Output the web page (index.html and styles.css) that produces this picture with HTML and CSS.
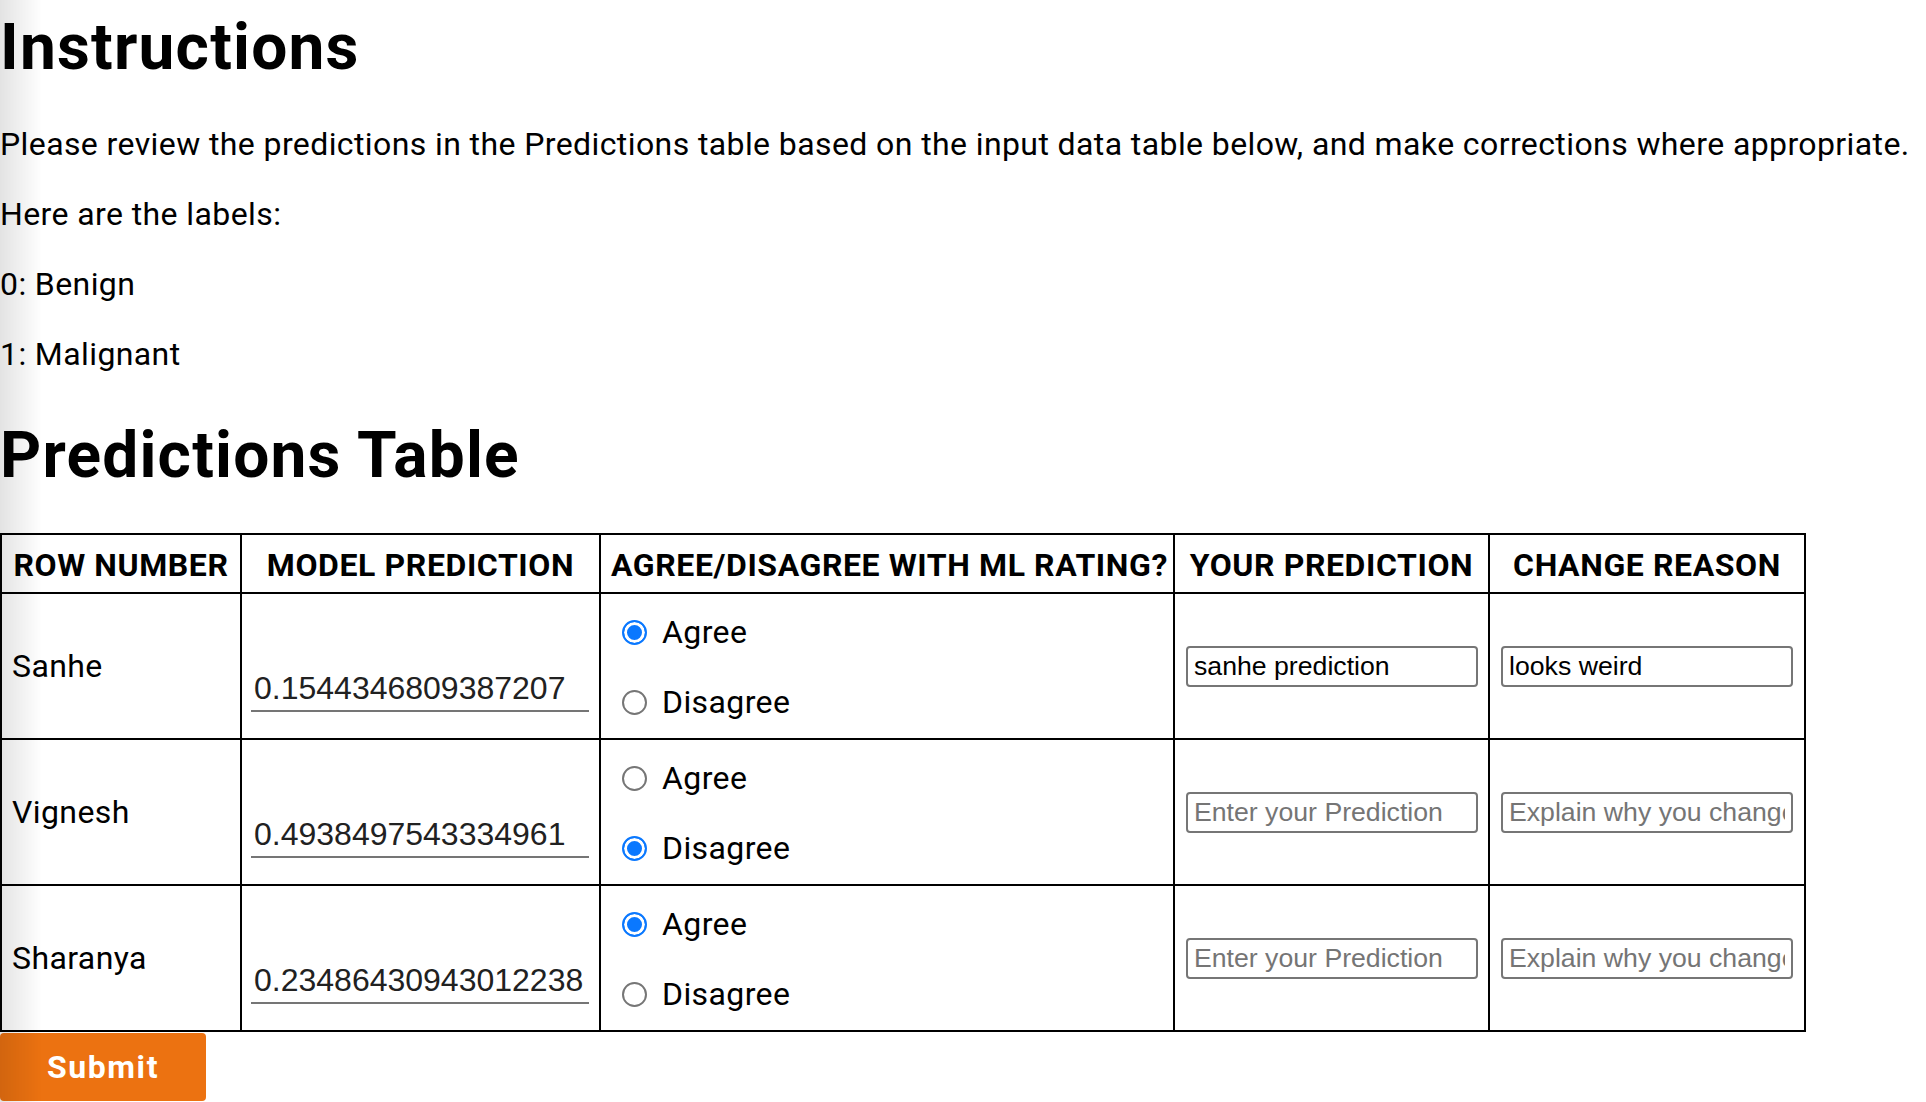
FILE: index.html
```html
<!DOCTYPE html>
<html lang="en">
<head>
<meta charset="utf-8">
<title>Predictions Review</title>
<link rel="stylesheet" href="styles.css">
</head>
<body>
<main class="page">
  <h1 class="title title-first">Instructions</h1>
  <p class="text">Please review the predictions in the Predictions table based on the input data table below, and make corrections where appropriate.</p>
  <p class="text">Here are the labels:</p>
  <p class="text">0: Benign</p>
  <p class="text">1: Malignant</p>
  <h2 class="title title-table">Predictions Table</h2>
  <form class="review">
    <table class="pred-table">
      <colgroup>
        <col class="c-row">
        <col class="c-model">
        <col class="c-agree">
        <col class="c-yours">
        <col class="c-reason">
      </colgroup>
      <thead>
        <tr>
          <th>ROW NUMBER</th>
          <th>MODEL PREDICTION</th>
          <th>AGREE/DISAGREE WITH ML RATING?</th>
          <th>YOUR PREDICTION</th>
          <th>CHANGE REASON</th>
        </tr>
      </thead>
      <tbody>
        <tr>
          <td class="row-name">Sanhe</td>
          <td class="model"><div class="num-field">0.1544346809387207</div></td>
          <td class="agree">
            <div class="radios">
              <label class="radio"><input type="radio" name="r1" checked><span>Agree</span></label>
              <label class="radio"><input type="radio" name="r1"><span>Disagree</span></label>
            </div>
          </td>
          <td class="entry"><input class="text-input" type="text" value="sanhe prediction" placeholder="Enter your Prediction"></td>
          <td class="entry"><input class="text-input" type="text" value="looks weird" placeholder="Explain why you changed the prediction"></td>
        </tr>
        <tr>
          <td class="row-name">Vignesh</td>
          <td class="model"><div class="num-field">0.4938497543334961</div></td>
          <td class="agree">
            <div class="radios">
              <label class="radio"><input type="radio" name="r2"><span>Agree</span></label>
              <label class="radio"><input type="radio" name="r2" checked><span>Disagree</span></label>
            </div>
          </td>
          <td class="entry"><input class="text-input" type="text" placeholder="Enter your Prediction"></td>
          <td class="entry"><input class="text-input" type="text" placeholder="Explain why you changed the prediction"></td>
        </tr>
        <tr>
          <td class="row-name">Sharanya</td>
          <td class="model"><div class="num-field">0.23486430943012238</div></td>
          <td class="agree">
            <div class="radios">
              <label class="radio"><input type="radio" name="r3" checked><span>Agree</span></label>
              <label class="radio"><input type="radio" name="r3"><span>Disagree</span></label>
            </div>
          </td>
          <td class="entry"><input class="text-input" type="text" placeholder="Enter your Prediction"></td>
          <td class="entry"><input class="text-input" type="text" placeholder="Explain why you changed the prediction"></td>
        </tr>
      </tbody>
    </table>
    <button class="submit" type="button">Submit</button>
  </form>
</main>
<div class="edge-shade"></div>
</body>
</html>
```
FILE: styles.css
```css
html, body {
  margin: 0;
  padding: 0;
  background: #ffffff;
}

body {
  font-family: Roboto, "Liberation Sans", sans-serif;
  font-size: 32px;
  letter-spacing: 0.4px;
  color: #000000;
}

.page {
  display: block;
}

.title {
  font-size: 64px;
  font-weight: 700;
  line-height: 76px;
  letter-spacing: 1.2px;
  margin: 45px 0 39px 0;
}

.title-first {
  margin-top: 10px;
}

.title-table {
  margin-bottom: 39px;
}

.text {
  font-size: 32px;
  line-height: 38px;
  margin: 32px 0;
}

.review {
  margin: 0;
}

.pred-table {
  border-collapse: collapse;
  table-layout: fixed;
  width: 1806px;
  border: 2px solid #000;
}

.c-row { width: 240px; }
.c-model { width: 359px; }
.c-agree { width: 574px; }
.c-yours { width: 315px; }
.c-reason { width: 316px; }

.pred-table th,
.pred-table td {
  border: 2px solid #000;
}

.pred-table th {
  font-size: 32px;
  font-weight: 700;
  line-height: 37px;
  letter-spacing: 0.6px;
  padding: 12px 10px 8px 10px;
  text-align: center;
  white-space: nowrap;
}

.pred-table td {
  padding: 10px 10px;
  vertical-align: middle;
  height: 124px;
}

.row-name {
  font-size: 32px;
  line-height: 38px;
}

.pred-table td.model {
  padding: 0 10px 0 9px;
}

.num-field {
  font-family: "Liberation Sans", Arial, sans-serif;
  font-size: 32px;
  line-height: 36px;
  letter-spacing: 0;
  color: #212121;
  padding: 50px 0 4px 3px;
  border-bottom: 2px solid #757575;
  white-space: nowrap;
  overflow: hidden;
}

.pred-table td.agree {
  padding: 11px 10px 9px 10px;
}

.radios {
  display: flex;
  flex-direction: column;
  gap: 17px;
}

.radio {
  display: flex;
  align-items: center;
  height: 53px;
  gap: 15px;
  padding-left: 11px;
  font-size: 32px;
}

.radio input {
  appearance: none;
  -webkit-appearance: none;
  margin: 0;
  width: 25px;
  height: 25px;
  border-radius: 50%;
  border: 2px solid #767676;
  background: #ffffff;
  flex: none;
}

.radio input:checked {
  border-color: #0a78ff;
  background: #0a78ff;
  box-shadow: inset 0 0 0 3px #ffffff;
}

.pred-table td.entry {
  padding: 0 10px 0 11px;
}

.text-input {
  display: block;
  box-sizing: border-box;
  width: 292px;
  height: 41px;
  margin: 0;
  padding: 0 6px;
  border: 2px solid #767676;
  border-radius: 4px;
  font-family: "Liberation Sans", Arial, sans-serif;
  font-size: 26.67px;
  letter-spacing: 0;
  color: #000000;
  background: #ffffff;
}

.text-input::placeholder {
  color: #757575;
}

.submit {
  display: block;
  margin: 1px 0 0 0;
  width: 206px;
  height: 68px;
  padding: 0;
  border: none;
  border-radius: 4px;
  background: #ec7211;
  color: #ffffff;
  font-family: Roboto, "Liberation Sans", sans-serif;
  font-size: 32px;
  font-weight: 700;
  letter-spacing: 1.6px;
}

.edge-shade {
  position: fixed;
  left: 0;
  top: 0;
  bottom: 0;
  width: 42px;
  pointer-events: none;
  background: linear-gradient(to right, rgba(0, 0, 0, 0.11), rgba(0, 0, 0, 0));
}
```
